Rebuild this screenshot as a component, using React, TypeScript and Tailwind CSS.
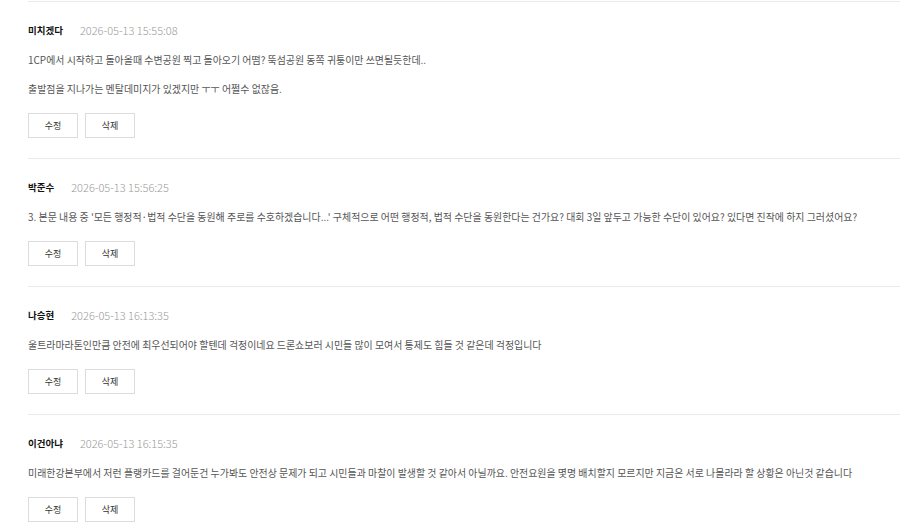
import React from "react";

type Comment = { name: string; date: string; lines: string[] };

const comments: Comment[] = [
  {
    name: "미치겠다",
    date: "2026-05-13 15:55:08",
    lines: [
      "1CP에서 시작하고 돌아올때 수변공원 찍고 돌아오기 어떰? 뚝섬공원 동쪽 귀퉁이만 쓰면될듯한데..",
      "출발점을 지나가는 멘탈데미지가 있겠지만 ㅜㅜ 어쩔수 없잖음.",
    ],
  },
  {
    name: "박준수",
    date: "2026-05-13 15:56:25",
    lines: [
      "3. 본문 내용 중 '모든 행정적·법적 수단을 동원해 주로를 수호하겠습니다...' 구체적으로 어떤 행정적, 법적 수단을 동원한다는 건가요? 대회 3일 앞두고 가능한 수단이 있어요? 있다면 진작에 하지 그러셨어요?",
    ],
  },
  {
    name: "나승현",
    date: "2026-05-13 16:13:35",
    lines: [
      "울트라마라톤인만큼 안전에 최우선되어야 할텐데 걱정이네요 드론쇼보러 시민들 많이 모여서 통제도 힘들 것 같은데 걱정입니다",
    ],
  },
  {
    name: "이건아냐",
    date: "2026-05-13 16:15:35",
    lines: [
      "미래한강본부에서 저런 플랭카드를 걸어둔건 누가봐도 안전상 문제가 되고 시민들과 마찰이 발생할 것 같아서 아닐까요. 안전요원을 몇명 배치할지 모르지만 지금은 서로 나몰라라 할 상황은 아닌것 같습니다",
    ],
  },
];

export default function App() {
  return (
    <div
      className="w-[900px] h-[529px] overflow-hidden bg-white pt-[1px] pl-[28px]"
      style={{ fontFamily: '"Noto Sans CJK KR", "Noto Sans", sans-serif' }}
    >
      {comments.map((c, i) => (
        <div key={i} className="border-t border-[#ebebeb] pt-[20px] pb-[20px]">
          <div className="flex items-center h-[16px] leading-[16px]">
            <span className="text-[9.5px] font-bold text-[#111]">{c.name}</span>
            <span className="ml-[17px] text-[11px] font-light text-[#999]">{c.date}</span>
          </div>
          {c.lines.map((l, j) => (
            <p
              key={j}
              className={`text-[9.95px] leading-[16px] text-[#555] whitespace-nowrap ${j === 0 ? "mt-[14px]" : "mt-[13px]"}`}
            >
              {l}
            </p>
          ))}
          <div className="flex gap-[7px] mt-[16px]">
            <button className="w-[50px] h-[25px] border border-[#dcdcdc] bg-white text-[9px] text-[#333] flex items-center justify-center">
              수정
            </button>
            <button className="w-[50px] h-[25px] border border-[#dcdcdc] bg-white text-[9px] text-[#333] flex items-center justify-center">
              삭제
            </button>
          </div>
        </div>
      ))}
    </div>
  );
}
